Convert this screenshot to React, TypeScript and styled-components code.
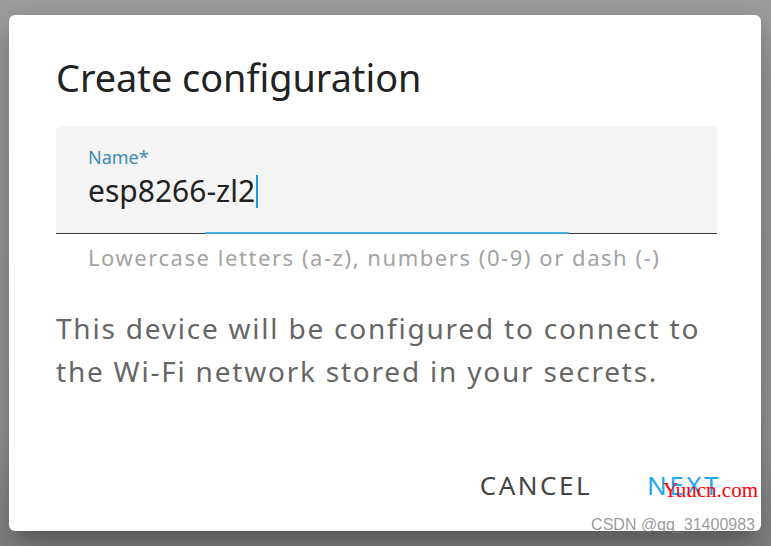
import React from "react";
import styled, { createGlobalStyle } from "styled-components";

const GlobalStyle = createGlobalStyle`
  html, body {
    margin: 0;
    padding: 0;
    background: #9d9d9d;
  }
  * {
    box-sizing: border-box;
  }
`;

const Backdrop = styled.div`
  width: 771px;
  height: 546px;
  padding: 15px 10px 15px 9px;
  background: linear-gradient(180deg, #9f9f9f 0%, #999 80%, #858585 100%);
  font-family: "Noto Sans", "Open Sans", sans-serif;
  position: relative;
  overflow: hidden;
`;

const Dialog = styled.div`
  height: 516px;
  background: #fff;
  border-radius: 6px;
  box-shadow: 0 11px 15px -7px rgba(0, 0, 0, 0.2),
    0 24px 38px 3px rgba(0, 0, 0, 0.14), 0 9px 46px 8px rgba(0, 0, 0, 0.12);
  display: flex;
  flex-direction: column;
  padding: 0 44px 0 47px;
`;

const Title = styled.h2`
  margin: 0;
  padding-top: 41px;
  font-size: 37.8px;
  font-weight: 400;
  line-height: 44px;
  color: #222;
`;

const Field = styled.div`
  margin-top: 26px;
  display: flex;
  flex-direction: column;
`;

const FieldBox = styled.div`
  position: relative;
  height: 108px;
  background: #f4f4f4;
  border-radius: 5px 5px 0 0;
  border-bottom: 1px solid #3a3a3a;
  padding: 18px 32px 0;
`;

const Label = styled.div`
  font-size: 18px;
  line-height: 26px;
  color: #3c8db5;
`;

const Value = styled.div`
  margin-top: 3px;
  font-size: 30px;
  line-height: 36px;
  color: #222;
  display: flex;
  align-items: center;
`;

const Caret = styled.span`
  display: inline-block;
  width: 2px;
  height: 33px;
  margin-left: 1px;
  background: #1a9be6;
`;

const Ripple = styled.div`
  position: absolute;
  left: 50%;
  bottom: -1px;
  width: 364px;
  height: 2px;
  transform: translateX(-50%);
  background: #4aace0;
`;

const Helper = styled.div`
  padding: 9px 32px 0;
  font-size: 22px;
  line-height: 28px;
  letter-spacing: 1.55px;
  color: #a3a3a3;
  white-space: nowrap;
`;

const Body = styled.p`
  margin: 36px 0 0;
  font-size: 28px;
  line-height: 43px;
  letter-spacing: 1.78px;
  color: #666;
`;

const Actions = styled.div`
  margin-top: auto;
  margin-right: -4px;
  padding-bottom: 28px;
  display: flex;
  justify-content: flex-end;
  gap: 55px;
`;

const Button = styled.button<{ $primary?: boolean }>`
  border: none;
  background: none;
  padding: 0;
  font-family: inherit;
  font-size: 26px;
  line-height: 36px;
  letter-spacing: 2.5px;
  text-transform: uppercase;
  color: ${p => (p.$primary ? "#1ea9ef" : "#444")};
  cursor: pointer;
`;

const Watermark = styled.div`
  position: absolute;
  right: 13px;
  top: 478px;
  font-family: "Liberation Serif", serif;
  font-size: 21px;
  color: #ff0000;
`;

const Credit = styled.div`
  position: absolute;
  right: 16px;
  top: 516px;
  font-family: "Liberation Sans", sans-serif;
  font-size: 16px;
  color: rgba(120, 120, 120, 0.75);
`;

export default function App() {
  return (
    <>
      <GlobalStyle />
      <Backdrop>
        <Dialog>
          <Title>Create configuration</Title>
          <Field>
            <FieldBox>
              <Label>Name*</Label>
              <Value>
                esp8266-zl2
                <Caret />
              </Value>
              <Ripple />
            </FieldBox>
            <Helper>Lowercase letters (a-z), numbers (0-9) or dash (-)</Helper>
          </Field>
          <Body>
            This device will be configured to connect to the Wi-Fi network
            stored in your secrets.
          </Body>
          <Actions>
            <Button>Cancel</Button>
            <Button $primary>Next</Button>
          </Actions>
        </Dialog>
        <Watermark>Yuucn.com</Watermark>
        <Credit>CSDN @qq_31400983</Credit>
      </Backdrop>
    </>
  );
}
